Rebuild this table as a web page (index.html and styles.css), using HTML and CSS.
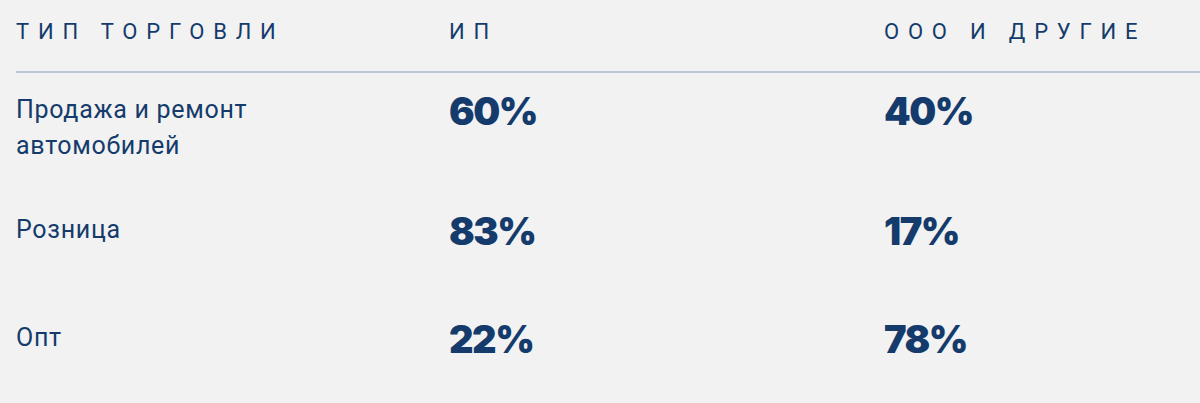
FILE: index.html
```html
<!DOCTYPE html>
<html lang="ru">
<head>
<meta charset="utf-8">
<link rel="stylesheet" href="styles.css">
</head>
<body>
<div class="table">
  <div class="row head">
    <div class="cell">Тип торговли</div>
    <div class="cell">ИП</div>
    <div class="cell">ООО и другие</div>
  </div>
  <div class="row">
    <div class="cell name">Продажа и ремонт<br>автомобилей</div>
    <div class="cell pct">60%</div>
    <div class="cell pct">40%</div>
  </div>
  <div class="row">
    <div class="cell name">Розница</div>
    <div class="cell pct">83%</div>
    <div class="cell pct">17%</div>
  </div>
  <div class="row">
    <div class="cell name">Опт</div>
    <div class="cell pct">22%</div>
    <div class="cell pct">78%</div>
  </div>
</div>
</body>
</html>
```

FILE: styles.css
```css
html, body {
  margin: 0;
  padding: 0;
  background: #f2f2f2;
}
body {
  color: #143b6b;
  font-family: Roboto, "Liberation Sans", sans-serif;
  overflow: hidden;
}
.table {
  margin-left: 16px;
}
.row {
  display: grid;
  grid-template-columns: 433px 435px 1fr;
  box-sizing: border-box;
  min-height: 108px;
  padding: 18px 0 29px;
  align-items: start;
}
.row.head {
  min-height: 0;
  padding: 15px 0 23px;
  border-bottom: 2px solid #bac7d7;
  font-size: 22px;
  line-height: 33px;
  text-transform: uppercase;
  letter-spacing: 8.8px;
}
.name {
  font-size: 25px;
  line-height: 36px;
  letter-spacing: 0.7px;
  padding-top: 1px;
}
.pct {
  font-family: Inter, Roboto, sans-serif;
  font-weight: 900;
  font-size: 38px;
  line-height: 40px;
  letter-spacing: -1.5px;
}
```
